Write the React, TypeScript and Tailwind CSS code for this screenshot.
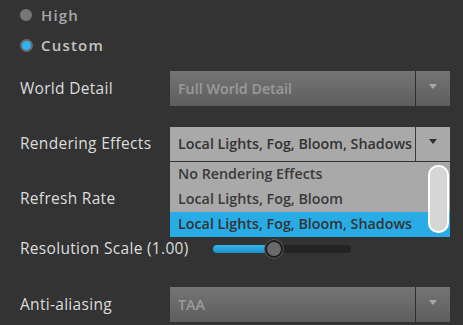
import React from "react";

const labelFont = { fontFamily: "'Open Sans', Lato, sans-serif" };
const ddFont = { fontFamily: "'Open Sans', Lato, sans-serif" };

function Arrow({ color }: { color: string }) {
  return (
    <svg width="8" height="5" viewBox="0 0 8 5">
      <polygon points="0,0 8,0 4,5" fill={color} />
    </svg>
  );
}

function DisabledSelect({ text }: { text: string }) {
  return (
    <div className="flex h-[35px] w-[280px] bg-gradient-to-b from-[#747474] to-[#5e5e5e]">
      <div
        className="flex flex-1 items-center whitespace-nowrap pl-[8px] text-[14.3px] font-semibold text-[#9a9a9a]"
        style={ddFont}
      >
        {text}
      </div>
      <div className="w-px bg-[#2e2e2e]" />
      <div className="flex w-[34px] items-center justify-center pb-[4px]">
        <Arrow color="#a8a8a8" />
      </div>
    </div>
  );
}

function Row({ label, children, className }: { label: string; children?: React.ReactNode; className?: string }) {
  return (
    <div className={"flex items-center " + (className ?? "")}>
      <div className="w-[170px] shrink-0 pl-[20px] text-[15.5px] tracking-[0.3px] text-[#dcdcdc]" style={labelFont}>
        {label}
      </div>
      {children}
    </div>
  );
}

const itemCls = "flex h-[25px] items-center whitespace-nowrap pl-[8px] text-[14.3px] font-semibold";

export default function App() {
  return (
    <div className="relative h-[325px] w-[463px] overflow-hidden bg-[#333333]">
      <div className="flex flex-col">
        <div className="flex h-[30px] items-center pl-[20px]">
          <div className="h-[12px] w-[12px] rounded-full bg-[#777777]" />
          <span className="ml-[9px] text-[15px] font-semibold tracking-[1.2px] text-[#a8a8a8]" style={labelFont}>
            High
          </span>
        </div>
        <div className="flex h-[30px] items-center pl-[20px]">
          <div className="flex h-[13px] w-[13px] items-center justify-center rounded-full bg-[#6a6a6a]">
            <div className="h-[9px] w-[9px] rounded-full bg-[#2eb4f0]" />
          </div>
          <span className="ml-[8px] text-[15px] font-semibold tracking-[1.2px] text-[#c4c4c4]" style={labelFont}>
            Custom
          </span>
        </div>

        <Row label="World Detail" className="mt-[11px] h-[35px]">
          <DisabledSelect text="Full World Detail" />
        </Row>

        <Row label="Rendering Effects" className="relative mt-[20px] h-[35px]">
          <div className="relative">
            <div className="flex h-[34px] w-[280px] bg-[#a9a9a9]">
              <div className={itemCls + " h-[34px] flex-1 text-[#333333]"} style={ddFont}>
                Local Lights, Fog, Bloom, Shadows
              </div>
              <div className="w-px bg-[#3a3a3a]" />
              <div className="flex w-[34px] items-center justify-center pb-[4px]">
                <Arrow color="#2e2e2e" />
              </div>
            </div>
            <div className="absolute left-0 top-[34px] z-10 w-[280px] border-t border-[#333333] bg-[#a9a9a9]">
              <div className={itemCls + " text-[#3a3a3a]"} style={ddFont}>
                No Rendering Effects
              </div>
              <div className={itemCls + " text-[#3a3a3a]"} style={ddFont}>
                Local Lights, Fog, Bloom
              </div>
              <div className={itemCls + " bg-[#29ace6] text-[#333333]"} style={ddFont}>
                Local Lights, Fog, Bloom, Shadows
              </div>
              <div className="absolute right-[1px] top-[3px] h-[68px] w-[21px] rounded-[10px] border-[2px] border-white bg-[#d6d6d6]" />
            </div>
          </div>
        </Row>

        <Row label="Refresh Rate" className="mt-[20px] h-[35px]">
          <DisabledSelect text="" />
        </Row>

        <div className="mt-[20px] flex h-[25px] items-center">
          <div className="w-[213px] shrink-0 pl-[20px] text-[15.5px] tracking-[0.3px] text-[#dcdcdc]" style={labelFont}>
            Resolution Scale (1.00)
          </div>
          <div className="relative h-[8px] w-[138px] rounded-full bg-[#232323]">
            <div className="absolute left-0 top-0 h-[8px] w-[62px] rounded-full bg-gradient-to-b from-[#35b8f0] to-[#1f8fc8]" />
            <div className="absolute left-[52px] top-[-5px] h-[18px] w-[18px] rounded-full border-[2px] border-[#1e1e1e] bg-[#6a6a6a] shadow-[0_0_0_1px_#555]" />
          </div>
        </div>

        <Row label="Anti-aliasing" className="mt-[26px] h-[35px]">
          <DisabledSelect text="TAA" />
        </Row>
      </div>
    </div>
  );
}
